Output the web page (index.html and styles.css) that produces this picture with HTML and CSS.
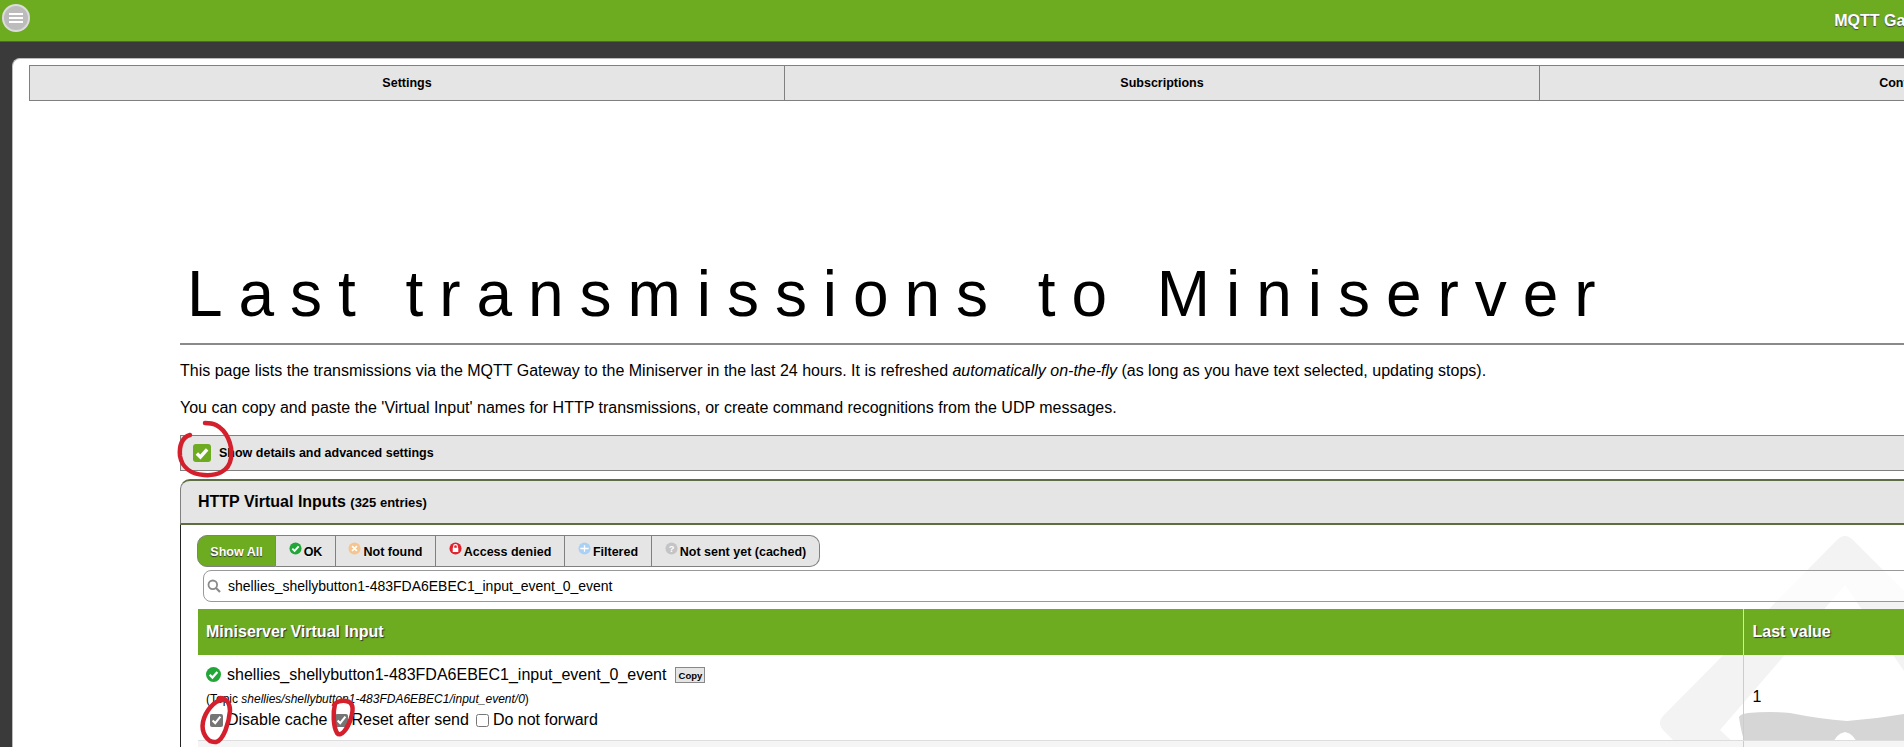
FILE: index.html
```html
<!DOCTYPE html>
<html lang="en">
<head>
    <meta charset="UTF-8">
    <meta name="viewport" content="width=device-width, initial-scale=1.0">
    <title>MQTT Gateway</title>
    <link rel="stylesheet" href="styles.css">
</head>
<body>
<div class="page">
    <header class="topbar">
        <a class="menu-btn" href="#"><span></span><span></span><span></span></a>
        <div class="topbar-title">MQTT Gateway</div>
    </header>

    <main class="panel">
        <!-- logo sits behind the transparent rows -->
        <svg class="watermark" width="300" height="230" viewBox="0 0 300 230">
            <path d="M197 11 Q205 3 213 11 L440 238 L60 238 L24 202 Q16 194 24 186 Z M205 56 L80 201 L120 238 L330 238 Z" fill="#f3f3f3" fill-rule="evenodd"/>
            <path d="M99 188 Q100 185 108 184 Q130 182 150 184 Q180 190 207 192 Q235 190 264 185 L300 184 L300 230 L222 230 Q218 205 205 203 Q192 205 188 230 L112 230 Q102 212 99 188 Z" fill="#d6d6d6"/>
        </svg>

        <nav class="tabs">
            <a class="tab" href="#">Settings</a>
            <a class="tab" href="#">Subscriptions</a>
            <a class="tab" href="#">Conversions</a>
        </nav>

        <div class="content">
            <h1 class="page-title">Last transmissions to Miniserver</h1>
            <hr class="rule">
            <p class="intro">This page lists the transmissions via the MQTT Gateway to the Miniserver in the last 24 hours. It is refreshed <em>automatically on-the-fly</em> (as long as you have text selected, updating stops).</p>
            <p class="intro intro-2">You can copy and paste the 'Virtual Input' names for HTTP transmissions, or create command recognitions from the UDP messages.</p>

            <label class="details-bar">
                <span class="green-check">
                    <svg width="16" height="16" viewBox="0 0 14 14"><path d="M2.5 7.5 L5.6 10.5 L11.5 3.8" fill="none" stroke="#fff" stroke-width="3"/></svg>
                </span>
                Show details and advanced settings
            </label>

            <section class="box">
                <h2 class="box-head">HTTP Virtual Inputs <small>(325 entries)</small></h2>
                <div class="box-body">
                    <div class="filters">
                        <a class="filter active" href="#">Show All</a>
                        <a class="filter filter-ok" href="#">
                            <svg class="ficon" viewBox="0 0 14 14"><circle cx="7" cy="7" r="6.5" fill="#22a638"/><path d="M3.6 7.2 L6 9.6 L10.4 4.6" fill="none" stroke="#fff" stroke-width="2"/></svg>OK
                        </a>
                        <a class="filter filter-nf" href="#">
                            <svg class="ficon" viewBox="0 0 14 14"><circle cx="7" cy="7" r="6.5" fill="#f6c48e"/><path d="M4.4 4.4 L9.6 9.6 M9.6 4.4 L4.4 9.6" stroke="#fff" stroke-width="1.8"/></svg>Not found
                        </a>
                        <a class="filter filter-ad" href="#">
                            <svg class="ficon" viewBox="0 0 14 14"><circle cx="7" cy="7" r="6.5" fill="#e0222c"/><rect x="4" y="6.2" width="6" height="4.6" fill="#fff"/><path d="M5 6.4 V4.8 A2 2 0 0 1 9 4.8 V6.4" fill="none" stroke="#fff" stroke-width="1.2"/></svg>Access denied
                        </a>
                        <a class="filter filter-fi" href="#">
                            <svg class="ficon" viewBox="0 0 14 14"><circle cx="7" cy="7" r="6.5" fill="#a9d0f5"/><path d="M2.5 7 H11.5 M7 3.5 V10.5" stroke="#fff" stroke-width="1.4"/></svg>Filtered
                        </a>
                        <a class="filter filter-ns" href="#">
                            <svg class="ficon" viewBox="0 0 14 14"><circle cx="7" cy="7" r="6.5" fill="#c4c4c4"/><text x="7" y="10.5" text-anchor="middle" class="ficon-q">?</text></svg>Not sent yet (cached)
                        </a>
                    </div>

                    <div class="search">
                        <svg class="search-icon" width="14" height="14" viewBox="0 0 14 14"><circle cx="5.8" cy="5.8" r="4.3" fill="none" stroke="#8a8a8a" stroke-width="1.8"/><path d="M9 9 L13 13" stroke="#8a8a8a" stroke-width="2.2"/></svg>
                        <span class="search-text">shellies_shellybutton1-483FDA6EBEC1_input_event_0_event</span>
                    </div>

                    <table class="inputs">
                        <colgroup><col class="col-name"><col></colgroup>
                        <thead>
                            <tr><th>Miniserver Virtual Input</th><th>Last value</th></tr>
                        </thead>
                        <tbody>
                            <tr>
                                <td>
                                    <div class="vi-name">
                                        <svg class="vi-icon" width="15" height="15" viewBox="0 0 14 14"><circle cx="7" cy="7" r="7" fill="#22a638"/><path d="M3.4 7.2 L6 9.8 L10.6 4.6" fill="none" stroke="#fff" stroke-width="2.1"/></svg>
                                        shellies_shellybutton1-483FDA6EBEC1_input_event_0_event
                                        <button class="copy-btn">Copy</button>
                                    </div>
                                    <div class="vi-topic">(Topic <em>shellies/shellybutton1-483FDA6EBEC1/input_event/0</em>)</div>
                                    <div class="vi-opts">
                                        <label class="opt"><input type="checkbox" checked>Disable cache</label>
                                        <label class="opt"><input type="checkbox" checked>Reset after send</label>
                                        <label class="opt"><input type="checkbox">Do not forward</label>
                                    </div>
                                </td>
                                <td class="vi-value">1</td>
                            </tr>
                            <tr class="row-alt"><td>&nbsp;</td><td>&nbsp;</td></tr>
                        </tbody>
                    </table>
                </div>
            </section>
        </div>

        <!-- red marker scribbles from whoever annotated the screenshot -->
        <svg class="scribbles" width="360" height="340" viewBox="170 410 360 340">
            <g fill="none" stroke="#d3202c" stroke-width="4.5" stroke-linecap="round">
                <path d="M190 435 C182 437 179 446 180 456 C182 468 192 474 204 475 C216 476 229 472 231 458 C233 444 226 430 216 425 C212 423 208 423 205 423"/>
                <path d="M223 700 C214 700 205 712 203 722 C201 732 207 743 216 742 C224 740 229 722 230 711 C230 703 226 698 220 698"/>
                <path d="M335 704 C333 712 333 726 337 733 C341 738 348 728 351 718 C354 708 353 702 346 701 C341 700 336 702 334 705"/>
            </g>
        </svg>
    </main>
</div>
</body>
</html>
```

FILE: styles.css
```css
html, body {
    margin: 0;
    height: 747px;
    overflow: hidden;
    background: #3a3a3a;
}
body {
    font-family: "Liberation Sans", Arial, sans-serif;
    font-size: 16px;
    color: #000;
}
.page {
    width: 3784px;
}

/* top bar */
.topbar {
    height: 41px;
    background: #6dab20;
    border-bottom: 1px solid #46701a;
    display: flex;
    align-items: center;
    justify-content: center;
    position: relative;
}
.topbar-title {
    color: #fff;
    font-weight: bold;
    font-size: 16px;
    text-shadow: 0 1px 1px #444;
}
.menu-btn {
    position: absolute;
    left: 2px;
    top: 4px;
    width: 24px;
    height: 24px;
    border: 2px solid #dcdcdc;
    border-radius: 50%;
    background: #bcbcbc;
    display: flex;
    flex-direction: column;
    align-items: center;
    justify-content: center;
    gap: 2px;
}
.menu-btn span {
    width: 14px;
    height: 2px;
    background: #fff;
}

/* main panel */
.panel {
    position: relative;
    margin: 16px 0 0 12px;
    padding: 7px 0 0 16px;
    height: 700px;
    background: #fff;
    border-top-left-radius: 8px;
    box-sizing: border-box;
    border-top: 1px solid #bbb;
    border-left: 1px solid #bbb;
}
.panel > * {
    position: relative;
}
.panel > .watermark {
    position: absolute;
    left: 1627px;
    top: 470px;
}
.panel > .scribbles {
    position: absolute;
    left: 157px;
    top: 351px;
    pointer-events: none;
}

.tabs {
    display: flex;
    margin-top: -1px;
}
.tab {
    flex: 0 0 755px;
    box-sizing: border-box;
    height: 36px;
    line-height: 34px;
    text-align: center;
    background: #e5e5e5;
    border: 1px solid #808080;
    border-left-width: 0;
    color: #000;
    font-size: 12.5px;
    font-weight: bold;
    text-decoration: none;
}
.tab:first-child {
    flex-basis: 756px;
    border-left-width: 1px;
}

/* text block */
.content {
    width: 3000px;
    padding: 156px 0 0 151px;
}
.page-title {
    margin: 0;
    font-size: 64px;
    line-height: 74px;
    font-weight: normal;
    letter-spacing: 15.95px;
    padding-left: 7px;
}
.rule {
    margin: 12px 0 0;
    height: 0;
    border: 0;
    border-top: 2px solid #8a8a8a;
}
.intro {
    margin: 16px 0 0;
    line-height: 20px;
}
.intro-2 {
    margin-top: 17px;
}

.details-bar {
    margin-top: 17px;
    height: 36px;
    box-sizing: border-box;
    background: #e5e5e5;
    border: 1px solid #808080;
    display: flex;
    align-items: center;
    gap: 8px;
    padding-left: 12px;
    font-size: 12.5px;
    font-weight: bold;
}
.green-check {
    width: 18px;
    height: 18px;
    border-radius: 3px;
    background: #6dab20;
    display: flex;
    align-items: center;
    justify-content: center;
}

/* http inputs box */
.box {
    margin-top: 8px;
}
.box-head {
    margin: 0;
    height: 46px;
    box-sizing: border-box;
    line-height: 41px;
    padding-left: 17px;
    background: #e5e5e5;
    border: 1px solid #5f6e42;
    border-width: 2px 0 2px 1px;
    border-left-color: #808080;
    border-top-left-radius: 10px;
    font-size: 16px;
}
.box-head small {
    font-size: 13px;
}
.box-body {
    border-left: 1px solid #222;
    padding: 10px 0 0 16px;
}

.filters {
    display: inline-flex;
    height: 32px;
    box-sizing: border-box;
    vertical-align: top;
}
.filter {
    box-sizing: border-box;
    height: 32px;
    line-height: 32px;
    background: #e5e5e5;
    border: 1px solid #808080;
    border-left-width: 0;
    color: #000;
    font-size: 12.5px;
    font-weight: bold;
    text-decoration: none;
    text-shadow: 0 1px 0 #f3f3f3;
    text-align: center;
}
.filter.active {
    width: 79px;
    background: #6dab20;
    color: #fff;
    text-shadow: 0 1px 1px #333;
    border-radius: 10px 0 0 10px;
    border-left-width: 1px;
}
.filter-ok { width: 60px; }
.filter-nf { width: 100px; }
.filter-ad { width: 129px; }
.filter-fi { width: 87px; }
.filter-ns {
    width: 168px;
    border-radius: 0 10px 10px 0;
}
.ficon {
    width: 13px;
    height: 13px;
    margin-right: 2px;
    vertical-align: 1px;
}
.ficon-q {
    font-size: 10px;
    font-weight: bold;
    fill: #fff;
    text-shadow: none;
}

.search {
    margin: 3px 0 0 6px;
    height: 32px;
    box-sizing: border-box;
    background: rgba(255, 255, 255, 0.7);
    border: 1px solid #999;
    border-radius: 8px;
    display: flex;
    align-items: center;
    padding-left: 3px;
    gap: 7px;
    font-size: 14px;
}
.search-icon {
    flex: none;
}

/* table */
.inputs {
    margin: 7px 0 0 1px;
    width: 2900px;
    table-layout: fixed;
    border-collapse: collapse;
}
.col-name {
    width: 1545px;
}
.inputs th {
    height: 46px;
    padding: 0 8px;
    box-sizing: border-box;
    background: #6dab20;
    color: #fff;
    font-size: 16px;
    text-align: left;
    text-shadow: 1px 1px 1px #333;
}
.inputs th + th {
    border-left: 1px solid #d5e6bd;
    padding-left: 9px;
}
.inputs td {
    padding: 9px 8px 9px;
    border-bottom: 1px solid #ddd;
    vertical-align: middle;
}
.inputs td + td {
    border-left: 1px solid #ccc;
    padding-left: 9px;
}
.inputs .vi-value {
    padding-bottom: 11px;
}
.row-alt td {
    background: #f5f5f5;
}
.vi-name {
    height: 22px;
    line-height: 22px;
    display: flex;
    align-items: center;
    gap: 6px;
}
.vi-icon {
    flex: none;
    margin-top: -2px;
}
.copy-btn {
    margin-left: 3px;
    height: 16px;
    width: 30px;
    padding: 0;
    background: #e5e5e5;
    border: 1px solid #888;
    font-family: inherit;
    font-size: 9.5px;
    font-weight: bold;
    color: #000;
}
.vi-topic {
    margin-top: 5px;
    height: 16px;
    line-height: 16px;
    font-size: 12px;
}
.vi-opts {
    margin-top: 2px;
    height: 22px;
    display: flex;
    align-items: center;
}
.opt {
    display: flex;
    align-items: center;
    margin-right: 3px;
}
.opt input {
    margin: 0 4px 0 4px;
    accent-color: #757575;
}
```
